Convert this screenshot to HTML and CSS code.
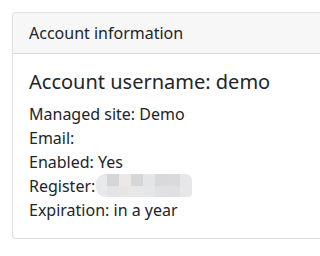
FILE: index.html
```html
<!DOCTYPE html>
<html>
<head>
<meta charset="utf-8">
<link rel="stylesheet" href="styles.css">
</head>
<body>
<div class="page">
  <div class="card">
    <div class="card-header">Account information</div>
    <div class="card-body">
      <h5 class="title">Account username: demo</h5>
      <div class="line">Managed site: Demo</div>
      <div class="line">Email:</div>
      <div class="line">Enabled: Yes</div>
      <div class="line">Register:<span class="redact"><span class="t1"></span><span class="t2"></span><span class="t3"></span><span class="t4"></span><span class="t5"></span><span class="t6"></span><span class="t7"></span><span class="t8"></span><span class="b1"></span><span class="b2"></span><span class="b3"></span><span class="b4"></span><span class="b5"></span><span class="b6"></span><span class="b7"></span><span class="b8"></span></span></div>
      <div class="line">Expiration: in a year</div>
    </div>
  </div>
</div>
</body>
</html>
```

FILE: styles.css
```css
html, body {
  margin: 0;
  padding: 0;
  background: #fff;
}
body {
  font-family: "Noto Sans", "Open Sans", sans-serif;
  font-size: 16px;
  line-height: 1.5;
  color: #212529;
}
.page {
  padding: 12px 0 12px 12px;
  overflow: hidden;
}
.card {
  margin-right: -24px;
  border: 1px solid rgba(0,0,0,.125);
  border-radius: 4px;
  background: #fff;
}
.card-header {
  padding: 8px 16px;
  background: rgba(0,0,0,.03);
  border-bottom: 1px solid rgba(0,0,0,.125);
  border-radius: 3px 3px 0 0;
}
.card-body {
  padding: 16px;
}
.title {
  margin: 0 0 8px;
  font-size: 20px;
  font-weight: 400;
  line-height: 1.2;
}
.line {
  height: 24px;
  white-space: nowrap;
}
.redact {
  display: inline-grid;
  vertical-align: top;
  grid-template-columns: 11px 12px 12px 12px 12px 13px 12px 12px;
  grid-template-rows: 12px 11px;
  margin-left: 1px;
  border-radius: 9px 6px 4px 9px;
  overflow: hidden;
  filter: blur(0.6px);
}
.t1 { background: #e8e9ea; }
.t2 { background: #d5d5d8; }
.t3 { background: #ebe8e5; }
.t4 { background: #d6d6d9; }
.t5 { background: #e4e5e7; }
.t6 { background: #d9d9dc; }
.t7 { background: #dadadd; }
.t8 { background: #e7e7e9; }
.b1 { background: #e8e9ea; }
.b2 { background: #e4e4e6; }
.b3 { background: #e7e6e5; }
.b4 { background: #e6e7e9; }
.b5 { background: #e5e6e8; }
.b6 { background: #e0e1e3; }
.b7 { background: #e0e0e2; }
.b8 { background: #e7e7e9; }
```
